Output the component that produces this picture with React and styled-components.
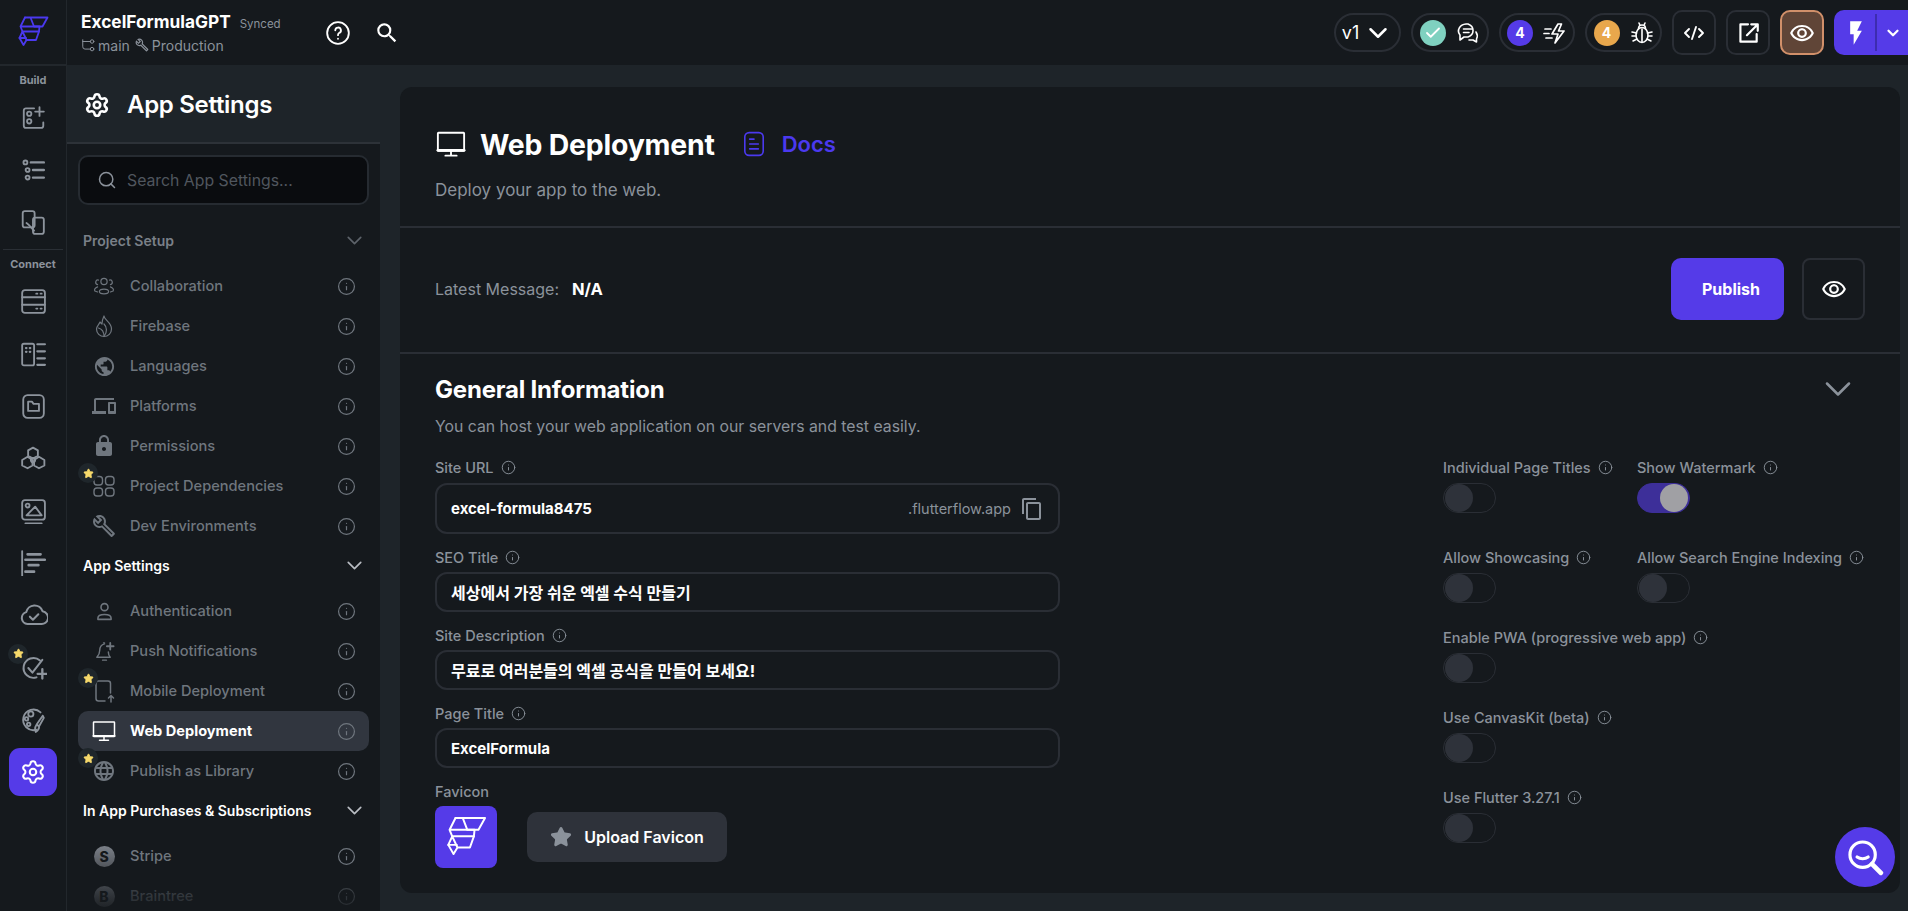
import React from 'react';
import styled, { createGlobalStyle } from 'styled-components';
import { Info, ChevronDown, Search, Settings, Star, Check } from 'lucide-react';
import {
  MdLock, MdPublic, MdOutlineBuild, MdLanguage, MdDevices, MdSearch,
  MdOutlineRemoveRedEye, MdFlashOn, MdOutlineContentCopy,
} from 'react-icons/md';

const GlobalStyle = createGlobalStyle`
  html, body { margin: 0; padding: 0; background: #1e2429; }
  * { box-sizing: border-box; }
  body { font-family: Inter, 'Noto Sans CJK KR', sans-serif; color: #fff; }
`;

const Page = styled.div`
  display: flex;
  width: 100%;
  height: 100vh;
  overflow: hidden;
  background: #1e2429;
`;

/* left icon rail */
const Rail = styled.nav`
  width: 67px;
  flex: none;
  background: #15191d;
  border-right: 1px solid #22272c;
  display: flex;
  flex-direction: column;
  align-items: center;
`;

const LogoCell = styled.div`
  width: 100%;
  height: 66px;
  flex: none;
  display: flex;
  align-items: center;
  justify-content: center;
  border-bottom: 2px solid #22272c;
  color: #4b39ef;
`;

const RailLabel = styled.div`
  height: 25px;
  padding-top: 3px;
  font-size: 11px;
  font-weight: 700;
  color: #8b929b;
  display: flex;
  align-items: center;
  justify-content: center;
`;

const RailDivider = styled.div`
  width: 60px;
  height: 1px;
  background: #2a2f35;
  margin-top: 1px;
`;

const RailButton = styled.div`
  position: relative;
  width: 48px;
  height: 52.4px;
  flex: none;
  display: flex;
  align-items: center;
  justify-content: center;
  color: #8d949d;
`;

const RailActive = styled.div`
  width: 48px;
  height: 48px;
  margin-top: 1px;
  border-radius: 11px;
  background: #553be8;
  color: #fff;
  display: flex;
  align-items: center;
  justify-content: center;
`;

const StarBadge = styled.span`
  position: absolute;
  left: ${p => p.$left}px;
  top: ${p => p.$top}px;
  width: 20px;
  height: 20px;
  border-radius: 50%;
  background: #1f262b;
  display: flex;
  align-items: center;
  justify-content: center;
  color: #f6d96b;
`;

const Right = styled.div`
  flex: 1;
  min-width: 0;
  display: flex;
  flex-direction: column;
`;

/* top bar */
const TopBar = styled.header`
  height: 65px;
  flex: none;
  background: #15191d;
  display: flex;
  align-items: center;
  padding-left: 14px;
`;

const ProjectInfo = styled.div`
  width: 244px;
  flex: none;
`;

const ProjectRow = styled.div`
  display: flex;
  align-items: baseline;
  gap: 9px;
  margin-top: -1px;
`;

const ProjectName = styled.span`
  font-size: 17.3px;
  font-weight: 700;
  color: #fff;
`;

const Synced = styled.span`
  font-size: 11.500px;
  color: #8b929b;
`;

const BranchRow = styled.div`
  display: flex;
  align-items: center;
  gap: 3px;
  margin-top: 5px;
  font-size: 14px;
  color: #8b929b;
  span { margin-right: 2px; }
`;

const TopIcon = styled.div`
  width: 26px;
  display: flex;
  justify-content: center;
  margin-right: 23px;
  color: #fff;
`;

const TopActions = styled.div`
  margin-left: auto;
  display: flex;
  align-items: center;
  gap: 10px;
`;

const Pill = styled.div`
  height: 39px;
  width: ${p => p.$w}px;
  border: 2px solid #2a2e35;
  border-radius: 20px;
  display: flex;
  align-items: center;
  justify-content: center;
  gap: ${p => p.$gap ?? 10}px;
  font-size: 18px;
  color: #fff;
`;

const Dot = styled.span`
  width: 26px;
  height: 26px;
  border-radius: 50%;
  background: ${p => p.$bg};
  display: flex;
  align-items: center;
  justify-content: center;
  font-size: 14px;
  font-weight: 700;
  color: #fff;
`;

const SquareButton = styled.div`
  width: 44px;
  height: 45px;
  border: 2px solid ${p => p.$accent ? '#d1906a' : '#2a2e35'};
  border-radius: 10px;
  background: ${p => p.$accent ? '#604537' : 'transparent'};
  display: flex;
  align-items: center;
  justify-content: center;
  color: #fff;
`;

const DeployButton = styled.div`
  width: 74px;
  height: 45px;
  background: #553be8;
  border-radius: 10px 0 0 10px;
  display: flex;
  align-items: center;
  color: #fff;
`;

const DeployBolt = styled.div`
  width: 43px;
  height: 100%;
  display: flex;
  align-items: center;
  justify-content: center;
  position: relative;
  &::after {
    content: '';
    position: absolute;
    right: 0;
    top: 4px;
    bottom: 4px;
    width: 2px;
    background: #3d2cb0;
  }
`;

const DeployCaret = styled.div`
  flex: 1;
  display: flex;
  justify-content: center;
`;

const Content = styled.div`
  flex: 1;
  min-height: 0;
  display: flex;
`;

/* settings sidebar */
const Sidebar = styled.aside`
  position: relative;
  width: 313px;
  flex: none;
  background: #15191d;
  overflow: hidden;
`;

const SidebarHead = styled.div`
  height: 79px;
  padding: 2px 0 0 17px;
  background: #1e2429;
  border-bottom: 2px solid #2d3238;
  display: flex;
  align-items: center;
  gap: 17px;
  font-size: 24px;
  font-weight: 600;
  letter-spacing: -0.3px;
`;

const SearchBox = styled.div`
  height: 50px;
  margin: 11px 11px 16px 11px;
  border: 2px solid #262b31;
  border-radius: 10px;
  background: #0a0c0f;
  display: flex;
  align-items: center;
  padding-left: 17px;
  gap: 10px;
  font-size: 15.8px;
  color: #50565e;
`;

const SectionHead = styled.div`
  height: 40px;
  margin: -1px 0 6px;
  display: flex;
  align-items: center;
  justify-content: space-between;
  padding: 0 13px 0 16px;
  font-size: 14px;
  font-weight: 600;
  color: ${p => p.$dim ? '#7a8088' : '#fff'};
`;

const SideRow = styled.div`
  position: relative;
  height: 40px;
  margin: 0 11px;
  border-radius: 10px;
  display: flex;
  align-items: center;
  background: ${p => p.$active ? '#31363f' : 'transparent'};
  color: ${p => p.$active ? '#fff' : '#6f767e'};
  font-size: 14.6px;
  font-weight: ${p => p.$active ? 700 : 500};
`;

const RowIcon = styled.span`
  width: 52px;
  flex: none;
  display: flex;
  justify-content: center;
`;

const RowInfo = styled.span`
  margin-left: auto;
  margin-right: 13px;
  display: flex;
  color: #6f767e;
`;

const CoinIcon = styled.span`
  width: 21px;
  height: 21px;
  border-radius: 50%;
  display: flex;
  align-items: center;
  justify-content: center;
  font-size: 14px;
  font-weight: 800;
  background: linear-gradient(180deg, #7b8088, #52565c);
  color: #14181b;
`;

const SideFade = styled.div`
  position: absolute;
  left: 0;
  right: 0;
  bottom: 0;
  height: 44px;
  background: linear-gradient(180deg, rgba(21, 25, 29, 0.35), rgba(21, 25, 29, 0.85));
`;

/* main panel */
const Panel = styled.main`
  flex: 1;
  min-width: 0;
  margin: 22px 8px 18px 20px;
  background: #15191d;
  border-radius: 12px;
  overflow: hidden;
`;

const PanelHead = styled.section`
  height: 141px;
  padding: 40px 35px 0;
  border-bottom: 2px solid #2a2e35;
`;

const TitleRow = styled.div`
  display: flex;
  align-items: center;
  height: 34px;
  padding-left: 1px;
`;

const PageTitle = styled.h1`
  margin: 0 0 0 14px;
  font-size: 28.4px;
  font-weight: 700;
  letter-spacing: -0.2px;
  color: #fff;
`;

const DocsLink = styled.a`
  display: flex;
  align-items: center;
  gap: 15px;
  margin-left: 26px;
  font-size: 22px;
  font-weight: 600;
  color: #4b39ef;
`;

const Sub = styled.p`
  margin: ${p => p.$top}px 0 0;
  font-size: ${p => p.$size}px;
  line-height: 22px;
  color: #8b929b;
`;

const PublishBar = styled.section`
  height: 126px;
  padding: 0 35px 2px;
  border-bottom: 2px solid #2a2e35;
  display: flex;
  align-items: center;
`;

const MessageLabel = styled.span`
  font-size: 16px;
  color: #8b929b;
`;

const MessageValue = styled.span`
  margin-left: 13px;
  font-size: 16.5px;
  font-weight: 700;
  color: #fff;
`;

const PublishButton = styled.button`
  margin-left: auto;
  width: 113px;
  height: 62px;
  padding-left: 13px;
  border: none;
  border-radius: 10px;
  background: #553be8;
  color: #fff;
  font: 700 16px Inter, sans-serif;
`;

const PreviewButton = styled.button`
  margin-left: 18px;
  width: 63px;
  height: 62px;
  border: 2px solid #2a2e35;
  border-radius: 8px;
  background: transparent;
  color: #fff;
  display: flex;
  align-items: center;
  justify-content: center;
`;

const General = styled.section`
  padding: 20px 35px 0;
`;

const GeneralHead = styled.div`
  display: flex;
  align-items: center;
  justify-content: space-between;
  height: 30px;
  padding-right: 5px;
  color: #8b929b;
`;

const GeneralTitle = styled.h2`
  margin: 0;
  font-size: 24px;
  font-weight: 700;
  letter-spacing: -0.2px;
  color: #fff;
`;

const Columns = styled.div`
  display: flex;
  margin-top: 19px;
`;

const FieldColumn = styled.div`
  width: 625px;
  flex: none;
`;

const ToggleColumn = styled.div`
  margin-left: 383px;
  flex: 1;
`;

const Label = styled.div`
  height: 20px;
  display: flex;
  align-items: center;
  gap: 7px;
  font-size: 14.5px;
  font-weight: 500;
  color: #8b929b;
  white-space: nowrap;
  svg { flex: none; }
`;

const FieldGroup = styled.div`
  margin-bottom: 13px;
`;

const Input = styled.div`
  height: ${p => p.$h || 40}px;
  margin-top: ${p => p.$top || 5}px;
  border: 2px solid #2a2e35;
  border-radius: 12px;
  display: flex;
  align-items: center;
  padding: 0 14px;
  font-size: ${p => p.$size || 15}px;
  font-weight: 700;
  color: #fff;
`;

const Suffix = styled.span`
  margin-left: auto;
  margin-right: 9px;
  font-size: 14.5px;
  font-weight: 400;
  color: #8b929b;
`;

const FaviconRow = styled.div`
  display: flex;
  align-items: center;
  margin-top: 5px;
  gap: 30px;
`;

const FaviconTile = styled.div`
  width: 62px;
  height: 62px;
  border-radius: 8px;
  background: #553be8;
  display: flex;
  align-items: center;
  justify-content: center;
  color: #fff;
`;

const UploadButton = styled.button`
  width: 200px;
  height: 50px;
  border: none;
  border-radius: 10px;
  background: #2e323a;
  color: #fff;
  display: flex;
  align-items: center;
  justify-content: center;
  gap: 12px;
  padding-left: 6px;
  font: 600 16px Inter, sans-serif;
  svg { color: #8b929b; }
`;

const ToggleRow = styled.div`
  display: grid;
  grid-template-columns: 194px auto;
  margin-bottom: ${p => p.$gap}px;
`;

const ToggleItem = styled.div`
  display: flex;
  flex-direction: column;
  gap: 6px;
`;

const Track = styled.div`
  width: 53px;
  height: 30px;
  border-radius: 15px;
  border: 1px solid ${p => p.$on ? '#3d2f99' : '#2a2e35'};
  background: ${p => p.$on ? '#3d2f99' : 'transparent'};
  display: flex;
  align-items: center;
  justify-content: ${p => p.$on ? 'flex-end' : 'flex-start'};
  padding: 0 1px;
`;

const Knob = styled.div`
  width: 28px;
  height: 28px;
  border-radius: 50%;
  background: ${p => p.$on ? '#a0a0a4' : '#2e323a'};
`;

const Fab = styled.div`
  position: absolute;
  right: 13px;
  bottom: 24px;
  width: 60px;
  height: 60px;
  border-radius: 50%;
  background: #553be8;
  display: flex;
  align-items: center;
  justify-content: center;
  color: #fff;
`;

// drawn icons
const Svg = ({ size = 26, sw = 1.7, children, vb = '0 0 24 24' }) => (
  <svg width={size} height={size} viewBox={vb} fill="none" stroke="currentColor" strokeWidth={sw} strokeLinecap="round" strokeLinejoin="round">
    {children}
  </svg>
);

const Logo = ({ size = 32, sw = 1.8 }) => (
  <Svg size={size} sw={sw} vb="0 0 32 32">
    <path d="M8 1.500H30.500L25.500 10.500H17L13.500 1.500" />
    <path d="M8 1.500L3.500 10.500H22.500L22 15.500H5.500L3.500 10.500" />
    <path d="M22 15.500L19 24H9.500L5.500 15.500L2.500 22L6.500 29L9.500 24" />
    <path d="M2.500 22H9" />
  </Svg>
);

const Monitor = ({ size = 28, sw = 1.5 }) => (
  <Svg size={size} sw={sw}>
    <rect x="1.500" y="3" width="21" height="14.500" rx="0.500" />
    <path d="M1.500 17H22.500" strokeWidth="2.200" />
    <path d="M12 17.500V21M7.500 21.300H16.500" />
  </Svg>
);

const railBuild = [
  <Svg><path d="M13 4H5.500A2 2 0 0 0 3.500 6V20A2 2 0 0 0 5.500 22H19.500A2 2 0 0 0 21.500 20V17" /><circle cx="8.500" cy="9" r="2" /><circle cx="8.500" cy="16" r="2" /><path d="M18 3V11M14 7H22" /></Svg>,
  <Svg><circle cx="5" cy="5" r="1.800" /><circle cx="7" cy="12" r="1.800" /><circle cx="7" cy="19" r="1.800" /><path d="M10 5H22M12 12H22M12 19H22" strokeWidth="2.200" /></Svg>,
  <Svg><rect x="2.500" y="2" width="11" height="15" rx="2" /><rect x="12" y="8" width="10" height="15" rx="2" /><path d="M6 13C9 15 11 18 13 20" /></Svg>,
];

const railConnect = [
  <Svg><rect x="2" y="2" width="21" height="21" rx="2.500" /><path d="M2 8.500H23M2 15.500H23M15 5.200H16M19 5.200H20M15 19H16M19 19H20" /></Svg>,
  <Svg><rect x="2" y="2.500" width="11" height="20" rx="1.500" /><path d="M5.500 6.500H6M9 6.500H9.500M5.500 10H6M9 10H9.500M16 3H23M16 9.500H23M16 16H23M16 22H23" strokeWidth="2" /></Svg>,
  <Svg><rect x="3" y="2" width="19" height="21" rx="4" /><path d="M7.500 8H11L12.500 10H17.500V16.500H7.500Z" /></Svg>,
  <Svg><path d="M12 1.500L16.500 4V9L12 11.500L7.500 9V4Z" /><path d="M7 10L11.500 13V18L7 20.500L2 18V13Z" /><path d="M17.500 10L22.500 13V18L17.500 20.500L13 18V13Z" /><circle cx="12" cy="13" r="2" /></Svg>,
  <Svg><rect x="2" y="2" width="21" height="18" rx="2.500" /><circle cx="7" cy="7" r="1.800" /><path d="M6 16L14 8L20 16ZM5 23.500H20" /></Svg>,
  <Svg><path d="M2 1V24" /><path d="M7 4H19M5 9H23M8 14H17M5 20H13" strokeWidth="2.400" /></Svg>,
  <Svg size={29}><path d="M7 19A5 5 0 0 1 6 9.200A7 7 0 0 1 19.500 8.500A5.300 5.300 0 0 1 18 19Z" /><path d="M9 13L11.500 15.500L16 11" /></Svg>,
  <Svg size={28}><path d="M18 5.500A8.500 8.500 0 1 0 15 20" /><path d="M8 12L11.500 16L20 5" /><path d="M20 13V21M16 17H24" strokeWidth="2" /></Svg>,
  <Svg><path d="M15 21A9.500 9.500 0 1 1 19 5" /><circle cx="10" cy="6.500" r="2.400" /><circle cx="6" cy="11" r="1.600" /><circle cx="8" cy="16" r="1.600" /><path d="M21 8L15.500 16L17.500 18L22 10ZM15.500 16C13.500 19 14 22 14.500 23C16 22 18 20.500 17.500 18" /></Svg>,
];

const SideIcons = {
  users: <Svg size={22} sw={1.3}><circle cx="12" cy="7" r="3.400" /><path d="M6 5.500A2.500 2.500 0 0 0 5 10.500M18 5.500A2.500 2.500 0 0 1 19 10.500" /><ellipse cx="12" cy="18" rx="5" ry="2.500" /><path d="M5 13C2.500 14 1 15.500 2 17.500L5 18.500M19 13C21.500 14 23 15.500 22 17.500L19 18.500" /></Svg>,
  flame: <Svg size={24} sw={1.2}><path d="M12 2C12 6 19.500 8 19.500 15A7.500 7.500 0 0 1 4.500 15C4.500 12 7 11 8 8C9 9 10 10 10 10C10 8 11 4 12 2Z" /><path d="M6.500 14C10 15 12 18 12 22.500M12 22.500C15.500 18 15 13 12 10" /></Svg>,
  grid: <Svg size={24} sw={1.4}><rect x="2" y="2.500" width="8.500" height="8.500" rx="3" /><rect x="13.500" y="2.500" width="8.500" height="8.500" rx="3" /><rect x="2" y="14" width="8.500" height="8" rx="3" /><rect x="13.500" y="14" width="8.500" height="8" rx="3" /></Svg>,
  mobile: <Svg size={24} sw={1.5}><path d="M13 22H6.500A2.500 2.500 0 0 1 4 19.500V4.500A2.500 2.500 0 0 1 6.500 2H16A2.500 2.500 0 0 1 18.500 4.500V14" /><path d="M19 23V16.500M16.500 19L19 16.500L21.500 19" /></Svg>,
  person: <Svg size={21} sw={1.800}><circle cx="12" cy="7" r="4" /><path d="M4.500 21V19.500C4.500 17 7 15.500 12 15.500C17 15.500 19.500 17 19.500 19.500V21Z" /></Svg>,
  bell: <Svg size={23} sw={1.500}><path d="M12 4C8 5 7 8 7 11C7 14 6 16 4 18H18C16.500 16.500 16 15 16 12.500" /><path d="M10 21H14M11 3H12" /><path d="M18 3V10M14.500 6.500H21.500" strokeWidth="1.900" /></Svg>,
};

const sections = [
  { title: 'Project Setup', dim: true, rows: [
    { label: 'Collaboration', icon: SideIcons.users },
    { label: 'Firebase', icon: SideIcons.flame },
    { label: 'Languages', icon: <MdPublic size={23} /> },
    { label: 'Platforms', icon: <MdDevices size={24} /> },
    { label: 'Permissions', icon: <MdLock size={24} /> },
    { label: 'Project Dependencies', icon: SideIcons.grid, star: true },
    { label: 'Dev Environments', icon: <MdOutlineBuild size={24} /> },
  ] },
  { title: 'App Settings', rows: [
    { label: 'Authentication', icon: SideIcons.person },
    { label: 'Push Notifications', icon: SideIcons.bell },
    { label: 'Mobile Deployment', icon: SideIcons.mobile, star: true },
    { label: 'Web Deployment', icon: <Monitor size={24} />, active: true },
    { label: 'Publish as Library', icon: <MdLanguage size={24} />, star: true },
  ] },
  { title: 'In App Purchases & Subscriptions', rows: [
    { label: 'Stripe', icon: <CoinIcon>S</CoinIcon> },
    { label: 'Braintree', icon: <CoinIcon>B</CoinIcon> },
  ] },
];

const Tip = ({ size = 15 }) => <Info size={size} strokeWidth={1.5} />;

const Toggle = ({ label, on }) => (
  <ToggleItem>
    <Label>{label} <Tip /></Label>
    <Track $on={on}><Knob $on={on} /></Track>
  </ToggleItem>
);

export default function App() {
  return (
    <Page>
      <GlobalStyle />
      <Rail>
        <LogoCell><Logo /></LogoCell>
        <RailLabel>Build</RailLabel>
        {railBuild.map((icon, i) => <RailButton key={i}>{icon}</RailButton>)}
        <RailDivider />
        <RailLabel>Connect</RailLabel>
        {railConnect.map((icon, i) => (
          <RailButton key={i}>
            {icon}
            {i === 7 && <StarBadge $left={-1} $top={2}><Star size={11} fill="currentColor" /></StarBadge>}
          </RailButton>
        ))}
        <RailActive><Settings size={26} strokeWidth={1.9} /></RailActive>
      </Rail>

      <Right>
        <TopBar>
          <ProjectInfo>
            <ProjectRow>
              <ProjectName>ExcelFormulaGPT</ProjectName>
              <Synced>Synced</Synced>
            </ProjectRow>
            <BranchRow>
              <Svg size={14}><circle cx="19" cy="6" r="3" /><circle cx="19" cy="19" r="3" /><path d="M3 3V15A4 4 0 0 0 7 19H16M3 6H16" /></Svg>
              <span>main</span>
              <MdOutlineBuild size={14} />
              <span>Production</span>
            </BranchRow>
          </ProjectInfo>
          <TopIcon><Svg size={26} sw={1.7}><circle cx="12" cy="12" r="10" /><path d="M9.500 9.500A2.600 2.600 0 1 1 13 12C12.200 12.500 12 13 12 14M12 17.200V17.300" /></Svg></TopIcon>
          <TopIcon><MdSearch size={28} /></TopIcon>

          <TopActions>
            <Pill $w={67} $gap={4}>v1 <ChevronDown size={30} strokeWidth={2} /></Pill>
            <Pill $w={78}>
              <Dot $bg="#7fd1c0"><Check size={18} strokeWidth={2.4} /></Dot>
              <Svg size={24} sw={1.6}><path d="M10 3H12A8 7 0 0 1 12 16H8L4 19V14A8 7 0 0 1 10 3Z" /><path d="M7.500 8H16M7.500 11.500H13" /><path d="M20 11C22 14 21 17 20.500 18V21L17 19H13" /></Svg>
            </Pill>
            <Pill $w={76}>
              <Dot $bg="#553be8">4</Dot>
              <Svg size={24} sw={1.7}><path d="M15 3L9 13H15L12 22L21 10H15.500L18.500 3Z" /><path d="M2 8H8M1 12.500H6M3 17H9" /></Svg>
            </Pill>
            <Pill $w={77}>
              <Dot $bg="#e8a74c">4</Dot>
              <Svg size={24} sw={1.6}><ellipse cx="12" cy="14" rx="6" ry="7.500" /><path d="M12 8V21M8.500 7.500C8.500 5 10 4 12 4C14 4 15.500 5 15.500 7.500M9 2L10 4.300M15 2L14 4.300M2 11L6.500 12M22 11L17.500 12M2 15H6M22 15H18M3 20L7 18M21 20L17 18" /></Svg>
            </Pill>
            <SquareButton>
              <Svg size={24} sw={1.9}><path d="M7 8L3 12L7 16M17 8L21 12L17 16M14 6L10 18" /></Svg>
            </SquareButton>
            <SquareButton>
              <Svg size={26} sw={2}><path d="M12 4H5V20H20V13" /><path d="M11 14L20 5M15 4H21V10" /></Svg>
            </SquareButton>
            <SquareButton $accent><MdOutlineRemoveRedEye size={26} /></SquareButton>
            <DeployButton>
              <DeployBolt><MdFlashOn size={28} /></DeployBolt>
              <DeployCaret><ChevronDown size={18} strokeWidth={3} /></DeployCaret>
            </DeployButton>
          </TopActions>
        </TopBar>

        <Content>
          <Sidebar>
            <SidebarHead><Settings size={26} strokeWidth={2.4} /> App Settings</SidebarHead>
            <SearchBox><Search size={20} strokeWidth={1.8} color="#8b929b" /> Search App Settings...</SearchBox>
            {sections.map(section => (
              <div key={section.title}>
                <SectionHead $dim={section.dim}>
                  {section.title}
                  <ChevronDown size={25} strokeWidth={1.6} color={section.dim ? '#5d636a' : '#b9bdc3'} />
                </SectionHead>
                {section.rows.map(row => (
                  <SideRow key={row.label} $active={row.active}>
                    <RowIcon>{row.icon}</RowIcon>
                    {row.label}
                    {row.star && <StarBadge $left={0} $top={-3}><Star size={11} fill="currentColor" /></StarBadge>}
                    <RowInfo><Info size={19} strokeWidth={1.5} /></RowInfo>
                  </SideRow>
                ))}
              </div>
            ))}
            <SideFade />
          </Sidebar>

          <Panel>
            <PanelHead>
              <TitleRow>
                <Monitor size={30} />
                <PageTitle>Web Deployment</PageTitle>
                <DocsLink>
                  <Svg size={26} sw={1.5}><rect x="3.500" y="1.500" width="17" height="21" rx="4" /><path d="M8 7.500H12M8 12H16M8 16.500H16" /></Svg>
                  Docs
                </DocsLink>
              </TitleRow>
              <Sub $top={18} $size={17}>Deploy your app to the web.</Sub>
            </PanelHead>

            <PublishBar>
              <MessageLabel>Latest Message:</MessageLabel>
              <MessageValue>N/A</MessageValue>
              <PublishButton>Publish</PublishButton>
              <PreviewButton><MdOutlineRemoveRedEye size={26} /></PreviewButton>
            </PublishBar>

            <General>
              <GeneralHead>
                <GeneralTitle>General Information</GeneralTitle>
                <ChevronDown size={44} strokeWidth={1.4} />
              </GeneralHead>
              <Sub $top={12} $size={15.8}>You can host your web application on our servers and test easily.</Sub>
              <Columns>
                <FieldColumn>
                  <FieldGroup>
                    <Label>Site URL <Tip /></Label>
                    <Input $h={51} $top={6}>
                      excel-formula8475
                      <Suffix>.flutterflow.app</Suffix>
                      <MdOutlineContentCopy size={24} color="#8b929b" />
                    </Input>
                  </FieldGroup>
                  <FieldGroup>
                    <Label>SEO Title <Tip /></Label>
                    <Input $size={16}>세상에서 가장 쉬운 엑셀 수식 만들기</Input>
                  </FieldGroup>
                  <FieldGroup>
                    <Label>Site Description <Tip /></Label>
                    <Input $size={16}>무료로 여러분들의 엑셀 공식을 만들어 보세요!</Input>
                  </FieldGroup>
                  <FieldGroup>
                    <Label>Page Title <Tip /></Label>
                    <Input>ExcelFormula</Input>
                  </FieldGroup>
                  <Label>Favicon</Label>
                  <FaviconRow>
                    <FaviconTile><Logo size={42} sw={1.500} /></FaviconTile>
                    <UploadButton><Star size={22} fill="currentColor" /> Upload Favicon</UploadButton>
                  </FaviconRow>
                </FieldColumn>

                <ToggleColumn>
                  <ToggleRow $gap={34}>
                    <Toggle label="Individual Page Titles" />
                    <Toggle label="Show Watermark" on />
                  </ToggleRow>
                  <ToggleRow $gap={24}>
                    <Toggle label="Allow Showcasing" />
                    <Toggle label="Allow Search Engine Indexing" />
                  </ToggleRow>
                  <ToggleRow $gap={24}><Toggle label="Enable PWA (progressive web app)" /></ToggleRow>
                  <ToggleRow $gap={24}><Toggle label="Use CanvasKit (beta)" /></ToggleRow>
                  <ToggleRow $gap={24}><Toggle label="Use Flutter 3.27.1" /></ToggleRow>
                </ToggleColumn>
              </Columns>
            </General>
          </Panel>
        </Content>
      </Right>

      <Fab>
        <Svg size={38} sw={2}><circle cx="10.500" cy="10.500" r="8" /><path d="M7 12C9 13.500 12 13.500 14 12" /><path d="M16.500 16.500L22 22" strokeWidth="3" /></Svg>
      </Fab>
    </Page>
  );
}
